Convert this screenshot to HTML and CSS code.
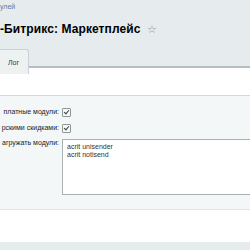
FILE: index.html
```html
<!doctype html>
<html lang="ru">
<head>
<meta charset="UTF-8">
<title>Маркетплейс</title>
<link rel="stylesheet" href="styles.css">
</head>
<body>
<div class="head">
	<div class="crumbs">улей</div>
	<h1 class="title">-Битрикс: Маркетплейс <span class="star">&#9734;</span></h1>
	<div class="tabs">
		<div class="tab">Лог</div>
	</div>
</div>
<div class="content">
	<div class="form">
		<div class="row">
			<div class="label">платные модули:</div>
			<div class="field"><span class="check"></span></div>
		</div>
		<div class="row">
			<div class="label">рскими скидками:</div>
			<div class="field"><span class="check"></span></div>
		</div>
		<div class="row">
			<div class="label">агружать модули:</div>
			<div class="field"><div class="area">acrit unisender<br>acrit notisend</div></div>
		</div>
	</div>
</div>
<div class="foot"></div>
</body>
</html>
```

FILE: styles.css
```css
body{margin:0;background:#e6ebed;font-family:"Liberation Sans",Arial,sans-serif;overflow:hidden;width:250px;height:250px;}
.head{height:66px;}
.crumbs{font-size:7px;color:#5f7c96;padding-top:2px;line-height:9px;}
.title{margin:11px 0 0;font-size:12px;line-height:15px;font-weight:bold;color:#000;white-space:nowrap;letter-spacing:0.1px;}
.star{font-size:11px;font-weight:normal;color:#8f9aa1;margin-left:3px;}
.tabs{display:flex;margin-top:12px;}
.tab{width:29px;height:25px;box-sizing:border-box;background:#eef1f2;border:1px solid #cbd2d5;border-left:0;border-bottom:0;border-radius:0 3px 0 0;font-size:7px;color:#333;padding:9px 0 0 8px;}
.content{background:#fff;border-top:2px solid #b7bec2;padding:27px 0 32px;}
.form{background:#f4f7f8;border-top:1px solid #d3dadd;border-bottom:1px solid #dfe5e7;padding:12px 0 15px;height:86px;}
.row{display:flex;align-items:flex-start;margin-bottom:7px;}
.row:last-child{margin-top:-1px;}
.label{width:59px;text-align:right;font-size:7px;line-height:8px;color:#222;padding-right:3px;white-space:nowrap;}
.field{flex:1;}
.check{display:block;width:7px;height:7px;border:1px solid #8e979c;border-radius:1px;background:#f7f7f7;position:relative;}
.check:after{content:"";position:absolute;left:2px;top:0;width:2px;height:4px;border:solid #444;border-width:0 1px 1px 0;transform:rotate(40deg);}
.area{border:1px solid #a9b0b4;border-right:0;background:#fff;font-size:7px;line-height:8px;color:#333;padding:3px 0 0 4px;box-sizing:border-box;height:56px;}
.foot{height:20px;background:#e6ebed;}
```
